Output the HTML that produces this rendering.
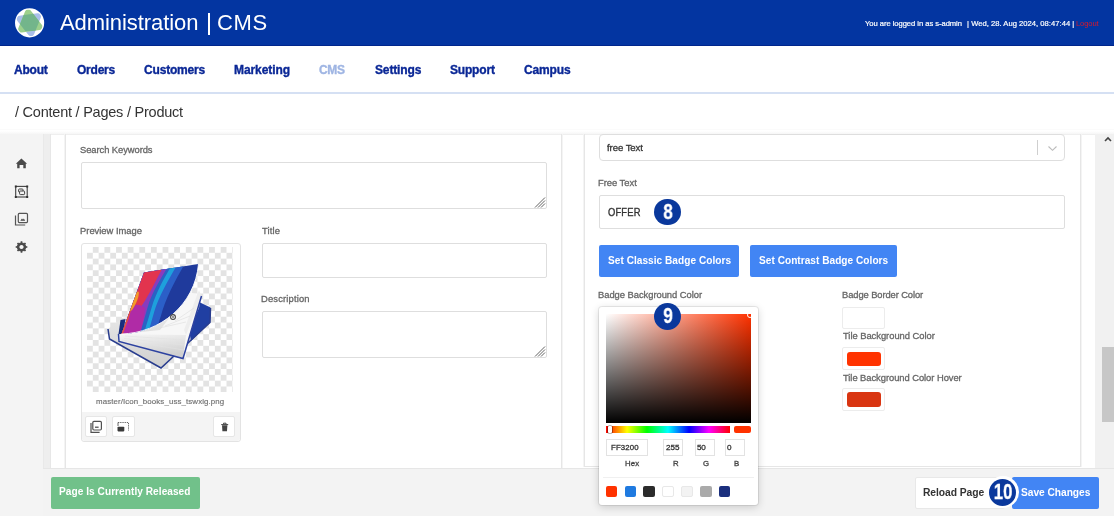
<!DOCTYPE html>
<html><head><meta charset="utf-8">
<style>
*{box-sizing:border-box;margin:0;padding:0}
html,body{width:1114px;height:516px;overflow:hidden;background:#fff;font-family:"Liberation Sans",sans-serif;position:relative;-webkit-font-smoothing:antialiased}
.a{will-change:transform}
.a{position:absolute;white-space:nowrap}
.b{position:absolute}
</style></head><body>
<div class="b" style="left:0;top:0;width:1114px;height:46px;background:#0335a1;border-bottom:1px solid #00268c"></div>
<svg class="b" style="left:0;top:0" width="60" height="46" viewBox="0 0 60 46">
<defs><mask id="lgm"><rect x="0" y="0" width="60" height="46" fill="#000"/><polygon points="37.80,16.40 31.05,33.10 19.96,18.90" fill="#fff" stroke="#fff" stroke-width="6.5" stroke-linejoin="round"/></mask>
<clipPath id="lgcc"><circle cx="29.6" cy="22.8" r="13.4"/></clipPath></defs>
<circle cx="29.6" cy="22.8" r="14.6" fill="#fff"/>
<g clip-path="url(#lgcc)">
<polygon points="37.80,16.40 31.05,33.10 19.96,18.90" fill="#a9bfea" stroke="#a9bfea" stroke-width="6.5" stroke-linejoin="round"/>
<polygon points="28.15,12.50 39.24,26.70 21.40,29.20" fill="#9dd08c" stroke="#9dd08c" stroke-width="6.5" stroke-linejoin="round"/>
<g mask="url(#lgm)"><polygon points="28.15,12.50 39.24,26.70 21.40,29.20" fill="#73b58b" stroke="#73b58b" stroke-width="6.5" stroke-linejoin="round"/></g>
</g>
</svg>
<div class="a" style="left:60.24px;top:12.18px;font-size:22px;line-height:22px;color:#fff;letter-spacing:-0.072px;">Administration</div>
<div class="b" style="left:208px;top:13px;width:1.6px;height:22px;background:#fff"></div>
<div class="a" style="left:216.90px;top:12.18px;font-size:22px;line-height:22px;color:#fff;letter-spacing:0.598px;">CMS</div>
<div class="a" style="left:865.43px;top:19.57px;font-size:7.6px;line-height:7.6px;color:#fff;letter-spacing:-0.041px;-webkit-text-stroke:0.2px currentColor;">You are logged in as s-admin</div>
<div class="a" style="left:966.82px;top:19.57px;font-size:7.6px;line-height:7.6px;color:#fff;letter-spacing:0.029px;-webkit-text-stroke:0.2px currentColor;">| Wed, 28. Aug 2024, 08:47:44 |</div>
<div class="a" style="left:1075.97px;top:19.57px;font-size:7.6px;line-height:7.6px;color:#d8192b;letter-spacing:-0.111px;">Logout</div>
<div class="b" style="left:0;top:92px;width:1114px;height:2px;background:#d5e0f3"></div>
<div class="a" style="left:13.70px;top:64.04px;font-size:12px;line-height:12px;color:#0a2796;font-weight:bold;letter-spacing:-0.200px;-webkit-text-stroke:0.35px currentColor;">About</div>
<div class="a" style="left:76.82px;top:64.04px;font-size:12px;line-height:12px;color:#0a2796;font-weight:bold;letter-spacing:-0.234px;-webkit-text-stroke:0.35px currentColor;">Orders</div>
<div class="a" style="left:144.42px;top:64.04px;font-size:12px;line-height:12px;color:#0a2796;font-weight:bold;letter-spacing:-0.176px;-webkit-text-stroke:0.35px currentColor;">Customers</div>
<div class="a" style="left:234.19px;top:64.04px;font-size:12px;line-height:12px;color:#0a2796;font-weight:bold;letter-spacing:-0.072px;-webkit-text-stroke:0.35px currentColor;">Marketing</div>
<div class="a" style="left:319.22px;top:64.04px;font-size:12px;line-height:12px;color:#9fb5e3;font-weight:bold;letter-spacing:-0.355px;-webkit-text-stroke:0.35px currentColor;">CMS</div>
<div class="a" style="left:374.54px;top:64.04px;font-size:12px;line-height:12px;color:#0a2796;font-weight:bold;letter-spacing:-0.143px;-webkit-text-stroke:0.35px currentColor;">Settings</div>
<div class="a" style="left:449.94px;top:64.04px;font-size:12px;line-height:12px;color:#0a2796;font-weight:bold;letter-spacing:-0.180px;-webkit-text-stroke:0.35px currentColor;">Support</div>
<div class="a" style="left:523.82px;top:64.04px;font-size:12px;line-height:12px;color:#0a2796;font-weight:bold;letter-spacing:-0.156px;-webkit-text-stroke:0.35px currentColor;">Campus</div>
<div class="a" style="left:15.00px;top:104.73px;font-size:14.5px;line-height:14.5px;color:#333;letter-spacing:-0.231px;">/ Content / Pages / Product</div>
<div class="b" style="left:0;top:129px;width:1114px;height:1px;background:#fbfbfb"></div>
<div class="b" style="left:0;top:131px;width:1114px;height:3px;background:linear-gradient(#fff,#f6f6f6)"></div>
<div class="b" style="left:0;top:134px;width:1114px;height:1px;background:#efefef"></div>
<div class="b" style="left:0;top:134px;width:43px;height:382px;background:#f4f4f4"></div>
<div class="b" style="left:42.5px;top:134px;width:8.5px;height:335px;background:#eeeeee;border-left:1px solid #e9e9e9;border-right:1px solid #e7e7e7"></div>
<div class="b" style="left:65px;top:134px;width:497px;height:336px;border:1px solid #e6e6e6;border-top:none;border-bottom:none;box-shadow:1px 0 0 #f4f4f4,-1px 0 0 #f4f4f4"></div>
<div class="b" style="left:584px;top:134px;width:497px;height:333px;border:1px solid #e6e6e6;border-top:none;box-shadow:1px 0 0 #f4f4f4,-1px 0 0 #f4f4f4"></div>
<div class="b" style="left:1095px;top:134px;width:19px;height:334px;background:#f1f1f1"></div>
<div class="b" style="left:1101.5px;top:347px;width:13px;height:75px;background:#c7c7c7"></div>
<svg class="b" style="left:1103px;top:135px" width="10" height="8" viewBox="0 0 10 8"><path d="M2 6 L5 3 L8 6" stroke="#444" stroke-width="1.6" fill="none"/></svg>
<div class="b" style="left:43px;top:468px;width:1071px;height:48px;background:#f3f3f3;border-top:1px solid #e6e6e6"></div>
<div class="a" style="left:80.28px;top:145.04px;font-size:9.4px;line-height:9.4px;color:#666;letter-spacing:-0.066px;-webkit-text-stroke:0.3px currentColor;">Search Keywords</div>
<div class="b" style="left:80.5px;top:162px;width:466px;height:47px;border:1px solid #dedede;border-radius:2px"></div>
<svg class="b" style="left:532.5px;top:195.5px" width="13" height="13" viewBox="0 0 13 13"><path d="M12 1.5 L2 11.5 M12 4.5 L5 11.5 M12 7.5 L8 11.5" stroke="#3a3a3a" stroke-width="0.8"/></svg>
<div class="a" style="left:79.82px;top:225.94px;font-size:9.4px;line-height:9.4px;color:#666;letter-spacing:0.001px;-webkit-text-stroke:0.3px currentColor;">Preview Image</div>
<div class="a" style="left:261.99px;top:225.94px;font-size:9.4px;line-height:9.4px;color:#666;letter-spacing:0.180px;-webkit-text-stroke:0.3px currentColor;">Title</div>
<div class="b" style="left:261.5px;top:243px;width:285px;height:35px;border:1px solid #dedede;border-radius:2px"></div>
<div class="a" style="left:260.92px;top:294.44px;font-size:9.4px;line-height:9.4px;color:#666;letter-spacing:0.166px;-webkit-text-stroke:0.3px currentColor;">Description</div>
<div class="b" style="left:261.5px;top:311px;width:285px;height:47px;border:1px solid #dedede;border-radius:2px"></div>
<svg class="b" style="left:532.5px;top:344.5px" width="13" height="13" viewBox="0 0 13 13"><path d="M12 1.5 L2 11.5 M12 4.5 L5 11.5 M12 7.5 L8 11.5" stroke="#3a3a3a" stroke-width="0.8"/></svg>
<div class="b" style="left:80.5px;top:243px;width:160px;height:199px;border:1px solid #e3e3e3;border-radius:3px;background:#fff"></div>
<div class="b" style="left:87px;top:247.4px;width:146px;height:145px;background:conic-gradient(from 90deg,#e3e3e3 25%,#fff 0 50%,#e3e3e3 0 75%,#fff 0) 5.82px 0/11.64px 11.64px"></div>
<svg class="b" style="left:87px;top:247px" width="146" height="146" viewBox="87 247 146 146">
<defs>
<clipPath id="cv"><path d="M144,272.5 L198.5,264 C195,305 160,333 121.5,334 Z"/></clipPath>
<linearGradient id="pg1" x1="0" y1="0" x2="0" y2="1"><stop offset="0" stop-color="#eeeeee"/><stop offset="1" stop-color="#cfcfcf"/></linearGradient>
<linearGradient id="pg2" x1="0" y1="0" x2="0.3" y2="1"><stop offset="0" stop-color="#f6f6f6"/><stop offset="1" stop-color="#d0d0d0"/></linearGradient>
<linearGradient id="pg3" x1="0" y1="0" x2="1" y2="0.3"><stop offset="0" stop-color="#fbfbfb"/><stop offset="1" stop-color="#e4e4e4"/></linearGradient>
</defs>
<!-- bottom book pages -->
<polygon points="108,329 122,318 200,302 210,307 210,322 161,368 109.5,339" fill="url(#pg1)"/>
<polygon points="200,302.5 210.5,307.5 210,322.5 191,341 189,330 199,308" fill="#203fa2"/>
<polyline points="108,329 109.5,339 161,368 210,322.5 210.5,308" fill="none" stroke="#283c8e" stroke-width="1.5"/>
<!-- top book back navy -->
<polygon points="118.5,334 120.5,320 125.5,319 123,334" fill="#1b2e7c"/>
<!-- top book page block (white region + front face) -->
<polygon points="118.5,335 121.5,334 160,330 189,292 201.5,296 183,358 118.5,341" fill="#f7f7f7"/>
<polygon points="121.5,334.2 186,335 183,358 118.5,341" fill="url(#pg2)"/>
<path d="M125,336 L185,340 M124,338.5 L184.5,345 M122,340 L184,350" stroke="#e2e2e2" stroke-width="0.6"/>
<polygon points="186,335 201.5,296 199,290 184,330" fill="#ededed"/>
<polyline points="118.5,334 119,341.5 183,358.5 201.5,296" fill="none" stroke="#2d42a0" stroke-width="1.5"/>
<path d="M155,329 L186,322 M165,326 L190,316 M175,321 L194,308" stroke="#dedede" stroke-width="0.6"/>
<!-- cover -->
<g clip-path="url(#cv)">
<g transform="matrix(0.55,-0.085,-0.23,0.615,144,272.5)">
<rect x="-10" y="-10" width="130" height="130" fill="#1f3a9c"/>
<path d="M-10,-10 L74,-10 C66,20 60,50 64,80 L66,120 L-10,120 Z" fill="#2b5fc8"/>
<path d="M-10,-10 L60,-10 C52,20 46,45 48,70 C50,90 52,105 52,120 L-10,120 Z" fill="#1ea0dc"/>
<path d="M-10,-10 L50,-10 C42,15 38,40 40,62 C42,85 44,100 44,120 L-10,120 Z" fill="#2a62c4"/>
<path d="M-10,-10 L44,-10 C36,15 30,38 32,60 C34,80 36,100 38,120 L-10,120 Z" fill="#8a3bbd"/>
<path d="M-10,-10 L34,-10 C28,20 26,40 20,55 C14,70 12,90 14,120 L-10,120 Z" fill="#e2344e"/>
<path d="M-10,55 C5,50 20,55 28,62 C34,80 36,100 38,120 L-10,120 Z" fill="#b02ba6"/>
<path d="M-10,30 L4,32 C8,40 8,52 4,62 L-10,66 Z" fill="#f39a2a"/>
<path d="M-10,64 L2,62 C4,75 4,90 2,120 L-10,120 Z" fill="#ec5a30"/>
</g>
</g>
<path d="M121.5,334 C160,333 195,305 198.5,264" stroke="#ffffff" stroke-width="0.9" fill="none"/>
<circle cx="173" cy="317" r="2.4" fill="#fff" stroke="#444" stroke-width="1.1"/>
<circle cx="173" cy="317" r="0.9" fill="#666"/>
</svg>
<div class="a" style="left:96.07px;top:397.61px;font-size:7.9px;line-height:7.9px;color:#707070;letter-spacing:0.103px;-webkit-text-stroke:0.15px currentColor;">master/Icon_books_uss_tswxig.png</div>
<div class="b" style="left:81.5px;top:412px;width:158px;height:29px;background:#f4f4f4;border-radius:0 0 3px 3px"></div>
<div class="b" style="left:85px;top:415.8px;width:22px;height:21.5px;background:#fff;border:1px solid #e6e6e6;border-radius:2px"></div>
<div class="b" style="left:111.7px;top:415.8px;width:23.299999999999997px;height:21.5px;background:#fff;border:1px solid #e6e6e6;border-radius:2px"></div>
<div class="b" style="left:213.3px;top:415.8px;width:22.0px;height:21.5px;background:#fff;border:1px solid #e6e6e6;border-radius:2px"></div>
<svg class="b" style="left:84px;top:413px" width="160" height="30" viewBox="84 413 160 30">
<rect x="92.8" y="421.4" width="8.6" height="8.6" rx="1.2" fill="none" stroke="#505050" stroke-width="1.2"/>
<path d="M91,423 L91,432.4 L99.6,432.4" fill="none" stroke="#505050" stroke-width="1.2"/>
<path d="M95,427.2 L98.6,427.2" stroke="#444" stroke-width="1.2"/>
<path d="M118,422.5 L128.5,422.5 L128.5,430.5" fill="none" stroke="#555" stroke-width="0.9" stroke-dasharray="1.3 0.9"/>
<path d="M118,422.5 L118,426" fill="none" stroke="#555" stroke-width="0.9"/>
<rect x="117.5" y="426.8" width="6.8" height="4.6" rx="0.8" fill="#3a3a3a"/>
<path d="M221.2,424.6 L228.2,424.6 M223.5,424.2 L223.5,423.2 L226,423.2 L226,424.2" stroke="#444" stroke-width="1" fill="none"/>
<path d="M222,425.3 L227.4,425.3 L227,431.2 L222.4,431.2 Z" fill="#444"/>
</svg>
<svg class="b" style="left:0;top:134px" width="43" height="140" viewBox="0 134 43 140">
<path d="M21.4,158.6 L15.8,163.8 L17.2,163.8 L17.2,168.2 L19.6,168.2 L19.6,165 L23.3,165 L23.3,168.2 L25.8,168.2 L25.8,163.8 L27.1,163.8 Z" fill="#4a4a4a"/>
<rect x="15.7" y="186.4" width="11.5" height="10.6" fill="none" stroke="#3f3f3f" stroke-width="1.1"/>
<rect x="14.8" y="185.5" width="2" height="2" fill="#333"/><rect x="26.2" y="185.5" width="2" height="2" fill="#333"/>
<rect x="14.8" y="196" width="2" height="2" fill="#333"/><rect x="26.2" y="196" width="2" height="2" fill="#333"/>
<rect x="18.6" y="189" width="4.4" height="3.2" rx="0.8" fill="none" stroke="#3f3f3f" stroke-width="1"/>
<rect x="19.6" y="191" width="5" height="3.6" rx="0.8" fill="#f4f4f4" stroke="#3f3f3f" stroke-width="1"/>
<rect x="18.3" y="213.4" width="9.2" height="9.2" rx="1" fill="none" stroke="#555" stroke-width="1.2"/>
<path d="M15.5,215.5 L15.5,225 L25.2,225" fill="none" stroke="#555" stroke-width="1.2"/>
<path d="M20.3,220.8 L22,218.6 L23,219.8 L23.8,218.6 L25.2,220.8 Z" fill="#444"/>
<g transform="translate(21.5 247) scale(0.48)" fill="#4a4a4a">
<path d="M9.6,-1.5 L12,-1.9 L12,1.9 L9.6,1.5 C9.3,2.9 8.8,4.1 8,5.2 L9.5,7.1 L7.1,9.5 L5.2,8 C4.1,8.8 2.9,9.3 1.5,9.6 L1.9,12 L-1.9,12 L-1.5,9.6 C-2.9,9.3 -4.1,8.8 -5.2,8 L-7.1,9.5 L-9.5,7.1 L-8,5.2 C-8.8,4.1 -9.3,2.9 -9.6,1.5 L-12,1.9 L-12,-1.9 L-9.6,-1.5 C-9.3,-2.9 -8.8,-4.1 -8,-5.2 L-9.5,-7.1 L-7.1,-9.5 L-5.2,-8 C-4.1,-8.8 -2.9,-9.3 -1.5,-9.6 L-1.9,-12 L1.9,-12 L1.5,-9.6 C2.9,-9.3 4.1,-8.8 5.2,-8 L7.1,-9.5 L9.5,-7.1 L8,-5.2 C8.8,-4.1 9.3,-2.9 9.6,-1.5 Z M0,-4.4 A4.4,4.4 0 1 0 0.01,-4.4 Z" fill-rule="evenodd"/>
</g>
</svg>
<div class="b" style="left:51px;top:476.5px;width:149px;height:32.3px;background:#71c18a;border-radius:2px"></div>
<div class="a" style="left:59.42px;top:486.95px;font-size:10.1px;line-height:10.1px;color:#fff;font-weight:bold;letter-spacing:0.052px;">Page Is Currently Released</div>
<div class="b" style="left:599px;top:134.3px;width:466px;height:27.2px;border:1px solid #dedede;border-radius:4px"></div>
<div class="a" style="left:606.66px;top:143.27px;font-size:9.6px;line-height:9.6px;color:#333;letter-spacing:-0.079px;-webkit-text-stroke:0.3px currentColor;">free Text</div>
<div class="b" style="left:1037.3px;top:140px;width:1px;height:15px;background:#cfcfcf"></div>
<svg class="b" style="left:1047px;top:145px" width="11" height="7" viewBox="0 0 11 7"><path d="M1.5 1.5 L5.5 5.3 L9.5 1.5" stroke="#bbb" stroke-width="1.1" fill="none"/></svg>
<div class="a" style="left:598.02px;top:178.34px;font-size:9.4px;line-height:9.4px;color:#666;letter-spacing:-0.020px;-webkit-text-stroke:0.3px currentColor;">Free Text</div>
<div class="b" style="left:599px;top:195.4px;width:466px;height:33.6px;border:1px solid #dedede;border-radius:2px"></div>
<div class="a" style="left:607.85px;top:208.44px;font-size:9.4px;line-height:9.4px;color:#333;letter-spacing:0.157px;transform:scaleY(1.1);transform-origin:0 7.96px;-webkit-text-stroke:0.3px currentColor;">OFFER</div>
<div class="b" style="left:654.40px;top:198.60px;width:26.8px;height:26.8px;border-radius:50%;background:#0a389c"></div>
<div class="a" style="left:617.80px;width:100px;text-align:center;top:200.86px;font-size:22.6px;line-height:22.6px;font-weight:bold;color:#fff;transform:scaleX(0.75);-webkit-text-stroke:0.3px #fff">8</div>
<div class="b" style="left:598.6px;top:245px;width:140.3px;height:31.8px;background:#4285f4;border-radius:2px"></div>
<div class="a" style="left:607.50px;top:256.05px;font-size:10.1px;line-height:10.1px;color:#fff;font-weight:bold;letter-spacing:0.032px;">Set Classic Badge Colors</div>
<div class="b" style="left:750.3px;top:245px;width:147.2px;height:31.8px;background:#4285f4;border-radius:2px"></div>
<div class="a" style="left:759.20px;top:256.05px;font-size:10.1px;line-height:10.1px;color:#fff;font-weight:bold;letter-spacing:0.030px;">Set Contrast Badge Colors</div>
<div class="a" style="left:597.82px;top:290.24px;font-size:9.4px;line-height:9.4px;color:#666;letter-spacing:-0.034px;-webkit-text-stroke:0.3px currentColor;">Badge Background Color</div>
<div class="a" style="left:842.22px;top:290.44px;font-size:9.4px;line-height:9.4px;color:#666;letter-spacing:-0.097px;-webkit-text-stroke:0.3px currentColor;">Badge Border Color</div>
<div class="b" style="left:842px;top:306.5px;width:43px;height:22.5px;border:1px solid #ececec;border-radius:2px;background:#fff"></div>
<div class="a" style="left:842.79px;top:330.74px;font-size:9.4px;line-height:9.4px;color:#666;letter-spacing:-0.030px;-webkit-text-stroke:0.3px currentColor;">Tile Background Color</div>
<div class="b" style="left:842px;top:347.3px;width:43px;height:22.7px;border:1px solid #ececec;border-radius:2px;background:#fff"></div>
<div class="b" style="left:846.5px;top:351.8px;width:34.5px;height:14.2px;background:#ff3300;border-radius:3px"></div>
<div class="a" style="left:842.79px;top:372.54px;font-size:9.4px;line-height:9.4px;color:#666;letter-spacing:-0.050px;-webkit-text-stroke:0.3px currentColor;">Tile Background Color Hover</div>
<div class="b" style="left:842px;top:388.4px;width:43px;height:22.2px;border:1px solid #ececec;border-radius:2px;background:#fff"></div>
<div class="b" style="left:846.5px;top:392.3px;width:34.5px;height:14.4px;background:#d93511;border-radius:3px"></div>
<div class="b" style="left:598.7px;top:306.6px;width:159.5px;height:198px;background:#fff;border-radius:3px;box-shadow:0 0 0 1px rgba(0,0,0,0.08),0 2px 8px rgba(0,0,0,0.18)"></div>
<div class="b" style="left:606px;top:314px;width:144.7px;height:108.6px;background:linear-gradient(to top,#000,rgba(0,0,0,0)),linear-gradient(to right,#fff,#ff3200)"></div>
<div class="b" style="left:746.5px;top:311.5px;width:6px;height:6px;border:1.2px solid #fff;border-radius:50%"></div>
<div class="b" style="left:605.7px;top:426px;width:124.5px;height:6.7px;background:linear-gradient(to right,#f00 0%,#ff0 17%,#0f0 33%,#0ff 50%,#00f 67%,#f0f 83%,#f00 100%)"></div>
<div class="b" style="left:608.4px;top:425.6px;width:3.6px;height:7.5px;background:#fff;border-radius:1px;box-shadow:0 0 0 0.6px rgba(0,0,0,.55)"></div>
<div class="b" style="left:733.5px;top:426px;width:17.2px;height:6.7px;background:#ff3200;border-radius:2px"></div>
<div class="b" style="left:606px;top:439px;width:42px;height:16.6px;border:1px solid #e2e2e2"></div>
<div class="b" style="left:663.4px;top:439px;width:20.100000000000023px;height:16.6px;border:1px solid #e2e2e2"></div>
<div class="b" style="left:694.5px;top:439px;width:20.0px;height:16.6px;border:1px solid #e2e2e2"></div>
<div class="b" style="left:724.8px;top:439px;width:20.5px;height:16.6px;border:1px solid #e2e2e2"></div>
<div class="a" style="left:610.66px;top:444.00px;font-size:7.8px;line-height:7.8px;color:#333;letter-spacing:0.153px;-webkit-text-stroke:0.3px currentColor;">FF3200</div>
<div class="a" style="left:665.60px;top:443.74px;font-size:8.1px;line-height:8.1px;color:#333;letter-spacing:0.011px;-webkit-text-stroke:0.3px currentColor;">255</div>
<div class="a" style="left:696.68px;top:443.74px;font-size:8.1px;line-height:8.1px;color:#333;letter-spacing:-0.163px;-webkit-text-stroke:0.3px currentColor;">50</div>
<div class="a" style="left:726.88px;top:443.74px;font-size:8.1px;line-height:8.1px;color:#333;-webkit-text-stroke:0.3px currentColor;">0</div>
<div class="a" style="left:625.16px;top:460.00px;font-size:7.8px;line-height:7.8px;color:#444;letter-spacing:0.138px;-webkit-text-stroke:0.3px currentColor;">Hex</div>
<div class="a" style="left:672.86px;top:460.00px;font-size:7.8px;line-height:7.8px;color:#444;-webkit-text-stroke:0.3px currentColor;">R</div>
<div class="a" style="left:703.11px;top:460.00px;font-size:7.8px;line-height:7.8px;color:#444;-webkit-text-stroke:0.3px currentColor;">G</div>
<div class="a" style="left:734.36px;top:460.00px;font-size:7.8px;line-height:7.8px;color:#444;-webkit-text-stroke:0.3px currentColor;">B</div>
<div class="b" style="left:603px;top:477px;width:151px;height:1px;background:#f0f0f0"></div>
<div class="b" style="left:605.70px;top:485.6px;width:11.5px;height:11px;background:#ff3200;border-radius:2px;"></div>
<div class="b" style="left:624.57px;top:485.6px;width:11.5px;height:11px;background:#1f7ae0;border-radius:2px;"></div>
<div class="b" style="left:643.44px;top:485.6px;width:11.5px;height:11px;background:#2b2b2b;border-radius:2px;"></div>
<div class="b" style="left:662.31px;top:485.6px;width:11.5px;height:11px;background:#ffffff;border-radius:2px;border:1px solid #e8e8e8;"></div>
<div class="b" style="left:681.18px;top:485.6px;width:11.5px;height:11px;background:#f3f3f3;border-radius:2px;border:1px solid #e8e8e8;"></div>
<div class="b" style="left:700.05px;top:485.6px;width:11.5px;height:11px;background:#aaaaaa;border-radius:2px;"></div>
<div class="b" style="left:718.92px;top:485.6px;width:11.5px;height:11px;background:#1b2f7d;border-radius:2px;"></div>
<div class="b" style="left:654.40px;top:302.80px;width:26.8px;height:26.8px;border-radius:50%;background:#0a389c"></div>
<div class="a" style="left:617.80px;width:100px;text-align:center;top:305.06px;font-size:22.6px;line-height:22.6px;font-weight:bold;color:#fff;transform:scaleX(0.75);-webkit-text-stroke:0.3px #fff">9</div>
<div class="b" style="left:914.9px;top:476.8px;width:90px;height:31.8px;background:#fff;border:1px solid #e8e8e8;border-radius:2px"></div>
<div class="a" style="left:923.20px;top:487.88px;font-size:10.3px;line-height:10.3px;color:#333;font-weight:bold;letter-spacing:-0.067px;">Reload Page</div>
<div class="b" style="left:1012.4px;top:476.8px;width:87px;height:31.8px;background:#4285f4;border-radius:2px"></div>
<div class="a" style="left:1020.99px;top:487.97px;font-size:10.2px;line-height:10.2px;color:#fff;font-weight:bold;letter-spacing:-0.028px;">Save Changes</div>
<div class="b" style="left:986.50px;top:475.90px;width:32.2px;height:32.2px;border-radius:50%;background:#fff"></div>
<div class="b" style="left:989.10px;top:478.50px;width:27px;height:27px;border-radius:50%;background:#0a389c"></div>
<div class="a" style="left:952.60px;width:100px;text-align:center;top:480.86px;font-size:22.6px;line-height:22.6px;font-weight:bold;color:#fff;transform:scaleX(0.75);-webkit-text-stroke:0.3px #fff">10</div>
</body></html>
